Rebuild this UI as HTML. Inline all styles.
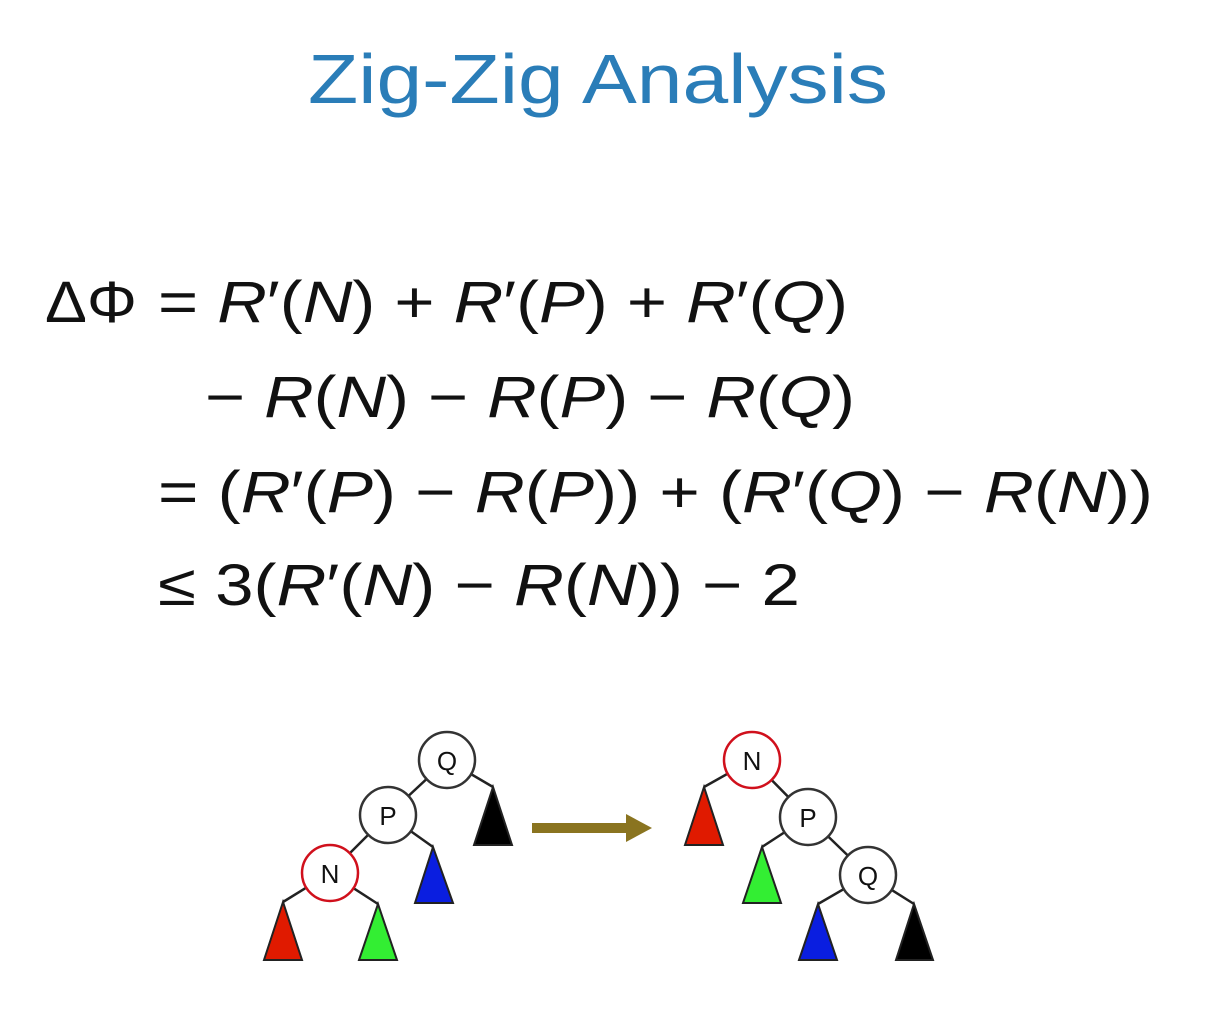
<!DOCTYPE html>
<html><head><meta charset="utf-8"><style>
html,body{margin:0;padding:0;background:#fff;}
svg{display:block}
</style></head><body>
<svg width="1206" height="1010" viewBox="0 0 1206 1010" xmlns="http://www.w3.org/2000/svg">
<rect width="1206" height="1010" fill="#fff"/>
<text x="598" y="103" text-anchor="middle" font-family="Liberation Sans, sans-serif" font-size="70" fill="#2a7db8" textLength="580" lengthAdjust="spacingAndGlyphs">Zig-Zig Analysis</text>
<g font-family="Liberation Sans, DejaVu Sans, sans-serif" font-size="58" fill="#111">
<text x="45" y="322" textLength="92" lengthAdjust="spacingAndGlyphs">ΔΦ</text>
<text x="158" y="322" textLength="690" lengthAdjust="spacingAndGlyphs">= <tspan font-style="italic">R</tspan>′(<tspan font-style="italic">N</tspan>) + <tspan font-style="italic">R</tspan>′(<tspan font-style="italic">P</tspan>) + <tspan font-style="italic">R</tspan>′(<tspan font-style="italic">Q</tspan>)</text>
<text x="205" y="417" textLength="650" lengthAdjust="spacingAndGlyphs">− <tspan font-style="italic">R</tspan>(<tspan font-style="italic">N</tspan>) − <tspan font-style="italic">R</tspan>(<tspan font-style="italic">P</tspan>) − <tspan font-style="italic">R</tspan>(<tspan font-style="italic">Q</tspan>)</text>
<text x="158" y="512" textLength="995" lengthAdjust="spacingAndGlyphs">= (<tspan font-style="italic">R</tspan>′(<tspan font-style="italic">P</tspan>) − <tspan font-style="italic">R</tspan>(<tspan font-style="italic">P</tspan>)) + (<tspan font-style="italic">R</tspan>′(<tspan font-style="italic">Q</tspan>) − <tspan font-style="italic">R</tspan>(<tspan font-style="italic">N</tspan>))</text>
<text x="158" y="605" textLength="642" lengthAdjust="spacingAndGlyphs">≤ 3(<tspan font-style="italic">R</tspan>′(<tspan font-style="italic">N</tspan>) − <tspan font-style="italic">R</tspan>(<tspan font-style="italic">N</tspan>)) − 2</text>
</g>
<g stroke="#222" stroke-width="2.5">
<!-- left tree edges -->
<line x1="447" y1="760" x2="493" y2="787"/>
<line x1="447" y1="760" x2="388" y2="815"/>
<line x1="388" y1="815" x2="433" y2="847"/>
<line x1="388" y1="815" x2="330" y2="873"/>
<line x1="330" y1="873" x2="283" y2="902"/>
<line x1="330" y1="873" x2="378" y2="904"/>
<!-- right tree edges -->
<line x1="752" y1="760" x2="704" y2="787"/>
<line x1="752" y1="760" x2="808" y2="817"/>
<line x1="808" y1="817" x2="762" y2="847"/>
<line x1="808" y1="817" x2="868" y2="875"/>
<line x1="868" y1="875" x2="818" y2="904"/>
<line x1="868" y1="875" x2="914" y2="904"/>
</g>
<g stroke="#222" stroke-width="2">
<polygon points="283,902 264,960 302,960" fill="#e01a00"/>
<polygon points="378,904 359,960 397,960" fill="#33ee33"/>
<polygon points="433,847 415,903 453,903" fill="#0a1ee0"/>
<polygon points="493,787 474,845 512,845" fill="#000"/>
<polygon points="704,787 685,845 723,845" fill="#e01a00"/>
<polygon points="762,847 743,903 781,903" fill="#33ee33"/>
<polygon points="818,904 799,960 837,960" fill="#0a1ee0"/>
<polygon points="914,904 896,960 933,960" fill="#000"/>
</g>
<g stroke-width="2.5" fill="#fff">
<circle cx="447" cy="760" r="28" stroke="#333"/>
<circle cx="388" cy="815" r="28" stroke="#333"/>
<circle cx="330" cy="873" r="28" stroke="#d0101c"/>
<circle cx="752" cy="760" r="28" stroke="#d0101c"/>
<circle cx="808" cy="817" r="28" stroke="#333"/>
<circle cx="868" cy="875" r="28" stroke="#333"/>
</g>
<g font-family="Liberation Sans, sans-serif" font-size="26" fill="#111" text-anchor="middle">
<text x="447" y="770">Q</text><text x="388" y="825">P</text><text x="330" y="883">N</text>
<text x="752" y="770">N</text><text x="808" y="827">P</text><text x="868" y="885">Q</text>
</g>
<rect x="532" y="823" width="96" height="10" fill="#8a7420"/>
<polygon points="626,814 652,828 626,842" fill="#8a7420"/>
</svg>
</body></html>
